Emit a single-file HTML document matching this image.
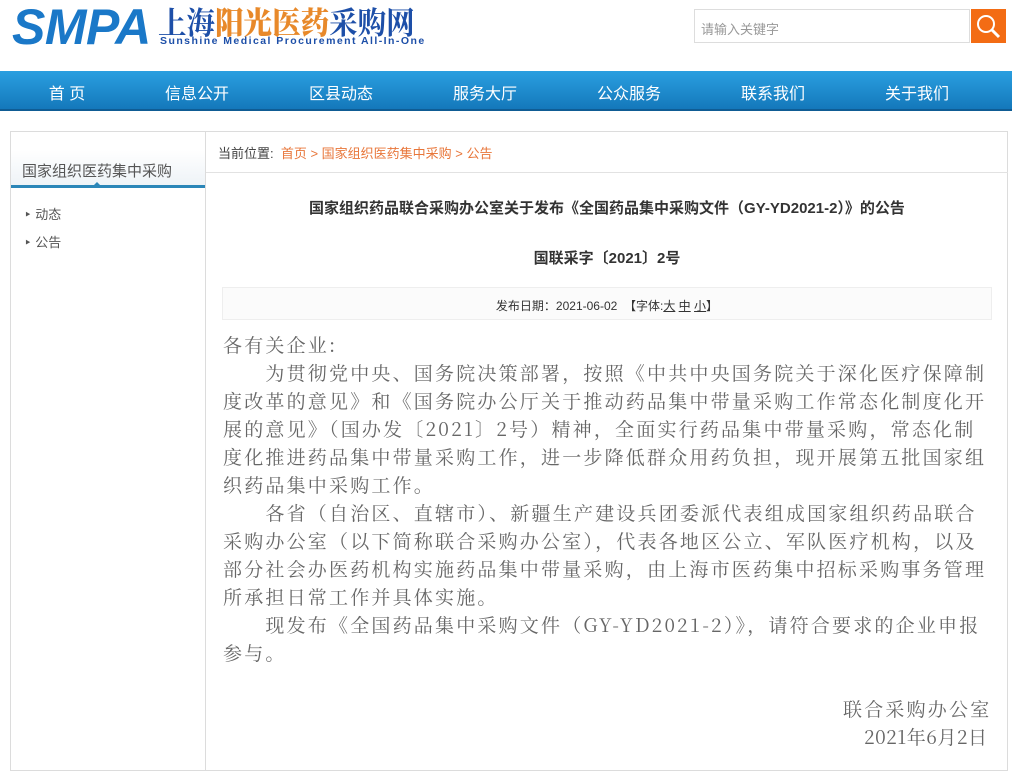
<!DOCTYPE html>
<html><head><meta charset="utf-8"><style>
*{margin:0;padding:0;box-sizing:border-box}
body{width:1012px;height:750px;overflow:hidden;background:#fff;font-family:"Liberation Sans","Noto Sans CJK SC",sans-serif;position:relative}
.abs{position:absolute}
.logo{left:12px;top:-3px;font:italic 900 50px "Liberation Sans",sans-serif;color:#1a78c8;letter-spacing:-0.5px;line-height:60px}
.cn{left:158px;top:1px;font:bold 31px "Noto Serif CJK SC",serif;letter-spacing:0;color:#1d4fa8;line-height:40px;white-space:nowrap;transform-origin:0 0;transform:scaleX(0.92)}
.cn b{color:#e8892a}
.en{left:160px;top:35px;font:bold 10.5px "Liberation Sans",sans-serif;color:#1d4fa8;letter-spacing:1.45px;white-space:nowrap}
.search{left:694px;top:9px;width:276px;height:34px;border:1px solid #ddd;font-size:13px;color:#999;padding:9px 6px}
.sbtn{left:971px;top:9px;width:35px;height:34px;background:#f36c14}
.nav{left:0;top:71px;width:1012px;height:40px;background:linear-gradient(#2a9fe0,#1478bb);border-bottom:2px solid #0f5c94}
.nav span{position:absolute;top:9px;color:#fff;font-size:16px;transform:translateX(-50%)}
.side{left:10px;top:131px;width:196px;height:640px;border:1px solid #dcdcdc}
.main{left:205px;top:131px;width:803px;height:640px;border:1px solid #dcdcdc}
.body div{position:absolute;left:223px;white-space:nowrap;font:19px "Noto Serif CJK SC","Liberation Serif",serif;letter-spacing:2.2px;color:#666}
</style></head><body>
<div class="abs logo">SMPA</div>
<div class="abs cn">上海<b>阳光医药</b>采购网</div>
<div class="abs en">Sunshine Medical Procurement All-In-One</div>
<div class="abs search">请输入关键字</div>
<div class="abs sbtn"><svg width="35" height="34"><circle cx="15" cy="15" r="8" fill="none" stroke="#fff" stroke-width="2"/><path d="M21 21l7 7" stroke="#fff" stroke-width="3"/></svg></div>
<div class="abs nav">
<span style="left:67px">首 页</span><span style="left:197px">信息公开</span><span style="left:341px">区县动态</span><span style="left:485px">服务大厅</span><span style="left:629px">公众服务</span><span style="left:773px">联系我们</span><span style="left:917px">关于我们</span>
</div>
<div class="abs side"></div>
<div class="abs main"></div>
<div class="abs" style="left:11px;top:150px;width:194px;height:38px;background:linear-gradient(#fff,#eef3f7);border-bottom:3px solid #2b86b8"></div>
<div class="abs" style="left:22px;top:160px;font-size:15px;color:#555">国家组织医药集中采购</div>
<div class="abs" style="left:92px;top:182px;width:0;height:0;border:5px solid transparent;border-bottom-color:#2b86b8;border-top:0"></div>
<div class="abs" style="left:24px;top:204px;font-size:13px;color:#555">‣ 动态</div>
<div class="abs" style="left:24px;top:232px;font-size:13px;color:#555">‣ 公告</div>
<div class="abs" style="left:206px;top:172px;width:802px;border-top:1px solid #e2e2e2"></div>
<div class="abs" style="left:218px;top:143px;font-size:13px;color:#444">当前位置: &nbsp;<span style="color:#e8763a">首页 &gt; 国家组织医药集中采购 &gt; 公告</span></div>
<div class="abs" style="left:206px;top:197px;width:802px;text-align:center;font-size:15px;font-weight:bold;color:#333">国家组织药品联合采购办公室关于发布《全国药品集中采购文件（GY-YD2021-2）》的公告</div>
<div class="abs" style="left:206px;top:247px;width:802px;text-align:center;font-size:15px;font-weight:bold;color:#333">国联采字〔2021〕2号</div>
<div class="abs" style="left:222px;top:287px;width:770px;height:33px;border:1px solid #eee;background:#fbfbfb;text-align:center;font-size:12px;color:#333;padding-top:9px">发布日期：2021-06-02 &nbsp;【字体:<u>大</u> <u>中</u> <u>小</u>】</div>
<div class="body">
<div style="top:331px">各有关企业:</div>
<div style="top:359px">　　为贯彻党中央、国务院决策部署，按照《中共中央国务院关于深化医疗保障制</div>
<div style="top:387px">度改革的意见》和《国务院办公厅关于推动药品集中带量采购工作常态化制度化开</div>
<div style="top:415px">展的意见》（国办发〔2021〕2号）精神，全面实行药品集中带量采购，常态化制</div>
<div style="top:443px">度化推进药品集中带量采购工作，进一步降低群众用药负担，现开展第五批国家组</div>
<div style="top:471px">织药品集中采购工作。</div>
<div style="top:499px">　　各省（自治区、直辖市）、新疆生产建设兵团委派代表组成国家组织药品联合</div>
<div style="top:527px">采购办公室（以下简称联合采购办公室），代表各地区公立、军队医疗机构，以及</div>
<div style="top:555px">部分社会办医药机构实施药品集中带量采购，由上海市医药集中招标采购事务管理</div>
<div style="top:583px">所承担日常工作并具体实施。</div>
<div style="top:611px">　　现发布《全国药品集中采购文件（GY-YD2021-2）》，请符合要求的企业申报</div>
<div style="top:639px">参与。</div>
<div style="top:695px;left:843px">联合采购办公室</div>
<div style="top:723px;left:864px;letter-spacing:0.5px">2021年6月2日</div>
</div>
</body></html>
